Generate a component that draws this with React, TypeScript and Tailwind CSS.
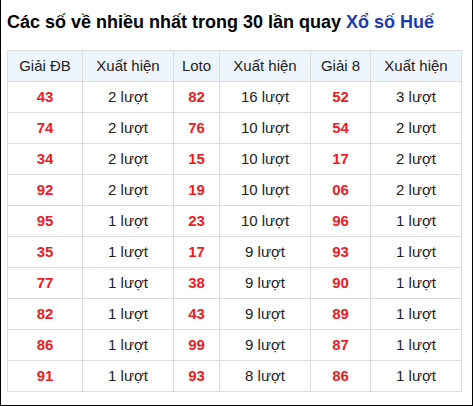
import React from "react";

const rows = [
  ["43", "2", "82", "16", "52", "3"],
  ["74", "2", "76", "10", "54", "2"],
  ["34", "2", "15", "10", "17", "2"],
  ["92", "2", "19", "10", "06", "2"],
  ["95", "1", "23", "10", "96", "1"],
  ["35", "1", "17", "9", "93", "1"],
  ["77", "1", "38", "9", "90", "1"],
  ["82", "1", "43", "9", "89", "1"],
  ["86", "1", "99", "9", "87", "1"],
  ["91", "1", "93", "8", "86", "1"],
];

const headers = ["Giải ĐB", "Xuất hiện", "Loto", "Xuất hiện", "Giải 8", "Xuất hiện"];
const widths = ["w-[75px]", "w-[91px]", "w-[46px]", "w-[91px]", "w-[60px]", "w-[91px]"];

const App = () => {
  return (
    <div className="w-[473px] h-[406px] bg-white border-l border-r border-b border-black font-['Liberation_Sans',Arial,sans-serif]">
      <h2 className="pt-[11px] pl-[6px] text-[18px] leading-[22px] font-bold text-black whitespace-nowrap">
        Các số về nhiều nhất trong 30 lần quay <span className="text-[#1a3cb0]">Xổ số Huế</span>
      </h2>
      <table className="mt-[17px] ml-[6px] w-[454px] table-fixed border-collapse text-[15px]">
        <thead>
          <tr className="bg-[#eef5fc]">
            {headers.map((h, i) => (
              <th key={i} className={`${widths[i]} h-[31px] border border-[#dddddd] font-normal text-[#222] text-center p-0`}>
                {h}
              </th>
            ))}
          </tr>
        </thead>
        <tbody>
          {rows.map((r, i) => (
            <tr key={i}>
              {r.map((c, j) =>
                j % 2 === 0 ? (
                  <td key={j} className="h-[31px] border border-[#dddddd] text-center font-bold text-[#ee1c25] p-0">
                    {c}
                  </td>
                ) : (
                  <td key={j} className="h-[31px] border border-[#dddddd] text-center text-[#222] p-0">
                    {c} lượt
                  </td>
                )
              )}
            </tr>
          ))}
        </tbody>
      </table>
    </div>
  );
};

export default App;
